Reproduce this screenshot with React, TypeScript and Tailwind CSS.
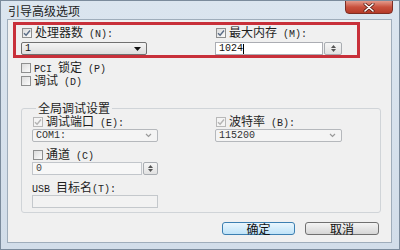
const zh = "font-['Noto_Sans_CJK_SC',sans-serif] text-[12px] leading-[12px]";
const en = "font-['Liberation_Mono',monospace] text-[10px] leading-[12px]";

function Check({ checked, disabled }: { checked?: boolean; disabled?: boolean }) {
  return (
    <span
      className={
        "w-[10px] h-[10px] shrink-0 border flex items-center justify-center " +
        (disabled
          ? "border-[#b8b8b8] bg-[#f4f4f4]"
          : "border-[#8e8f8f] bg-gradient-to-br from-[#dcdcdc] to-[#fbfbfb]")
      }
    >
      {checked && (
        <svg width="8" height="8" viewBox="0 0 8 8">
          <path
            d="M1 4.2 L3.1 6.3 L7 1.5"
            fill="none"
            stroke={disabled ? "#b4b4b4" : "#5a6c86"}
            strokeWidth="1.4"
          />
        </svg>
      )}
    </span>
  );
}

function Row({ children, checked, disabled }: { children: React.ReactNode; checked?: boolean; disabled?: boolean }) {
  return (
    <div className="h-[12px] flex items-center gap-[3px] pl-[1px] text-[#1e1e1e]">
      <Check checked={checked} disabled={disabled} />
      <span className="flex items-baseline whitespace-nowrap">{children}</span>
    </div>
  );
}

function Combo({ value, disabled, w }: { value: string; disabled?: boolean; w: string }) {
  return (
    <div
      className={
        w +
        " h-[13px] rounded-[2px] border flex items-center justify-between pl-[3px] pr-[5px] " +
        (disabled
          ? "border-[#b5b8bc] bg-[#f4f4f4] text-[#333]"
          : "border-[#707070] bg-gradient-to-b from-[#f4f4f4] to-[#dedede] text-[#111]")
      }
    >
      <span className={en}>{value}</span>
      {disabled ? (
        <svg width="7" height="5" viewBox="0 0 7 5">
          <path d="M1 1 L3.5 3.5 L6 1" fill="none" stroke="#9a9a9a" strokeWidth="1.2" />
        </svg>
      ) : (
        <svg width="7" height="4" viewBox="0 0 7 4">
          <path d="M0 0 H7 L3.5 4 Z" fill="#111" />
        </svg>
      )}
    </div>
  );
}

function Spin({ w }: { w: string }) {
  return (
    <div className={w + " h-[13px] ml-[1px] border border-[#a9adb2] rounded-[2px] bg-gradient-to-b from-[#f6f6f6] to-[#e2e2e2] flex flex-col items-center justify-center gap-[1px]"}>
      <svg width="5" height="3" viewBox="0 0 5 3">
        <path d="M0 3 L2.5 0 L5 3 Z" fill="#555" />
      </svg>
      <svg width="5" height="3" viewBox="0 0 5 3">
        <path d="M0 0 H5 L2.5 3 Z" fill="#555" />
      </svg>
    </div>
  );
}

export default function App() {
  return (
    <div className="w-[400px] h-[250px] bg-gradient-to-b from-[#dbe5ef] to-[#d2dde9] border border-[#7b8b9c] flex flex-col overflow-hidden">
      <div className="h-[18px] flex items-start justify-between shrink-0">
        <span className={zh + " pl-[7px] pt-[4px] text-[#222]"}>引导高级选项</span>
        <div className="w-[48px] h-[14px] -mt-[1px] mr-[6px] rounded-b-[4px] border border-[#7d2e24] bg-gradient-to-b from-[#e39a8c] via-[#c9513e] to-[#b53a28] flex items-center justify-center">
          <svg width="14" height="9" viewBox="0 0 14 9">
            <path d="M3 1 L11 8 M11 1 L3 8" stroke="#5a1d15" strokeWidth="3" strokeLinecap="round" />
            <path d="M3 1 L11 8 M11 1 L3 8" stroke="#fff" strokeWidth="1.6" strokeLinecap="round" />
          </svg>
        </div>
      </div>

      <div className="flex-1 flex px-[6px] pr-[7px] pb-[6px]">
        <div className="flex-1 bg-[#f0f0f0] border border-[#9fadbb] flex flex-col">
          {/* highlighted row */}
          <div className="ml-[5px] mt-[2px] w-[347px] h-[36px] border-[3px] border-[#c8303a] flex pl-[5px] pt-[2px]">
            <div className="w-[126px] flex flex-col">
              <Row checked>
                <span className={zh}>处理器数</span>
                <span className={en}>&nbsp;(N):</span>
              </Row>
              <div className="mt-[3px]">
                <Combo value="1" w="w-[126px]" />
              </div>
            </div>
            <div className="ml-[68px] flex flex-col">
              <Row checked>
                <span className={zh}>最大内存</span>
                <span className={en}>&nbsp;(M):</span>
              </Row>
              <div className="mt-[3px] flex">
                <div className="w-[108px] h-[13px] border border-[#abadb3] bg-white flex items-center pl-[3px]">
                  <span className={en + " text-[#111]"}>1024</span>
                  <span className="w-[1px] h-[10px] bg-black" />
                </div>
                <Spin w="w-[18px]" />
              </div>
            </div>
          </div>

          <div className="ml-[12px] mt-[4px] flex flex-col gap-[1px]">
            <Row>
              <span className={en}>PCI&nbsp;</span>
              <span className={zh}>锁定</span>
              <span className={en}>&nbsp;(P)</span>
            </Row>
            <Row>
              <span className={zh}>调试</span>
              <span className={en}>&nbsp;(D)</span>
            </Row>
          </div>

          <fieldset className="ml-[13px] mt-[15px] w-[360px] h-[111px] border border-[#d0d4d8] rounded-[3px] pl-[10px] pt-[2px]">
            <legend className={zh + " ml-[4px] px-[2px] text-[#1e1e1e]"}>全局调试设置</legend>
            <div className="flex">
              <div className="w-[126px] flex flex-col">
                <Row checked disabled>
                  <span className={zh}>调试端口</span>
                  <span className={en}>&nbsp;(E):</span>
                </Row>
                <div className="mt-[1px]">
                  <Combo value="COM1:" disabled w="w-[126px]" />
                </div>
              </div>
              <div className="ml-[57px] flex flex-col">
                <Row checked disabled>
                  <span className={zh}>波特率</span>
                  <span className={en}>&nbsp;(B):</span>
                </Row>
                <div className="mt-[1px]">
                  <Combo value="115200" disabled w="w-[127px]" />
                </div>
              </div>
            </div>

            <div className="mt-[7px]">
              <Row>
                <span className={zh}>通道</span>
                <span className={en}>&nbsp;(C)</span>
              </Row>
            </div>
            <div className="mt-[1px] flex">
              <div className="w-[110px] h-[13px] border border-[#c2c6cb] bg-[#f7f7f7] flex items-center pl-[3px]">
                <span className={en + " text-[#444]"}>0</span>
              </div>
              <Spin w="w-[15px]" />
            </div>

            <div className="mt-[6px] h-[12px] flex items-baseline text-[#1e1e1e]">
              <span className={en}>USB&nbsp;</span>
              <span className={zh}>目标名</span>
              <span className={en}>(T):</span>
            </div>
            <div className="mt-[2px] w-[126px] h-[13px] border border-[#c4c8cc] bg-[#f2f2f2]" />
          </fieldset>

          <div className="mt-[9px] flex justify-end gap-[10px] pr-[12px]">
            <button className={zh + " w-[73px] h-[13px] rounded-[3px] border border-[#3c7fb1] bg-gradient-to-b from-[#eaf6fd] to-[#bfe3f8] text-[#111] flex items-center justify-center"}>
              确定
            </button>
            <button className={zh + " w-[74px] h-[13px] rounded-[3px] border border-[#707070] bg-gradient-to-b from-[#f4f4f4] to-[#d6d6d6] text-[#111] flex items-center justify-center"}>
              取消
            </button>
          </div>
        </div>
      </div>
    </div>
  );
}
